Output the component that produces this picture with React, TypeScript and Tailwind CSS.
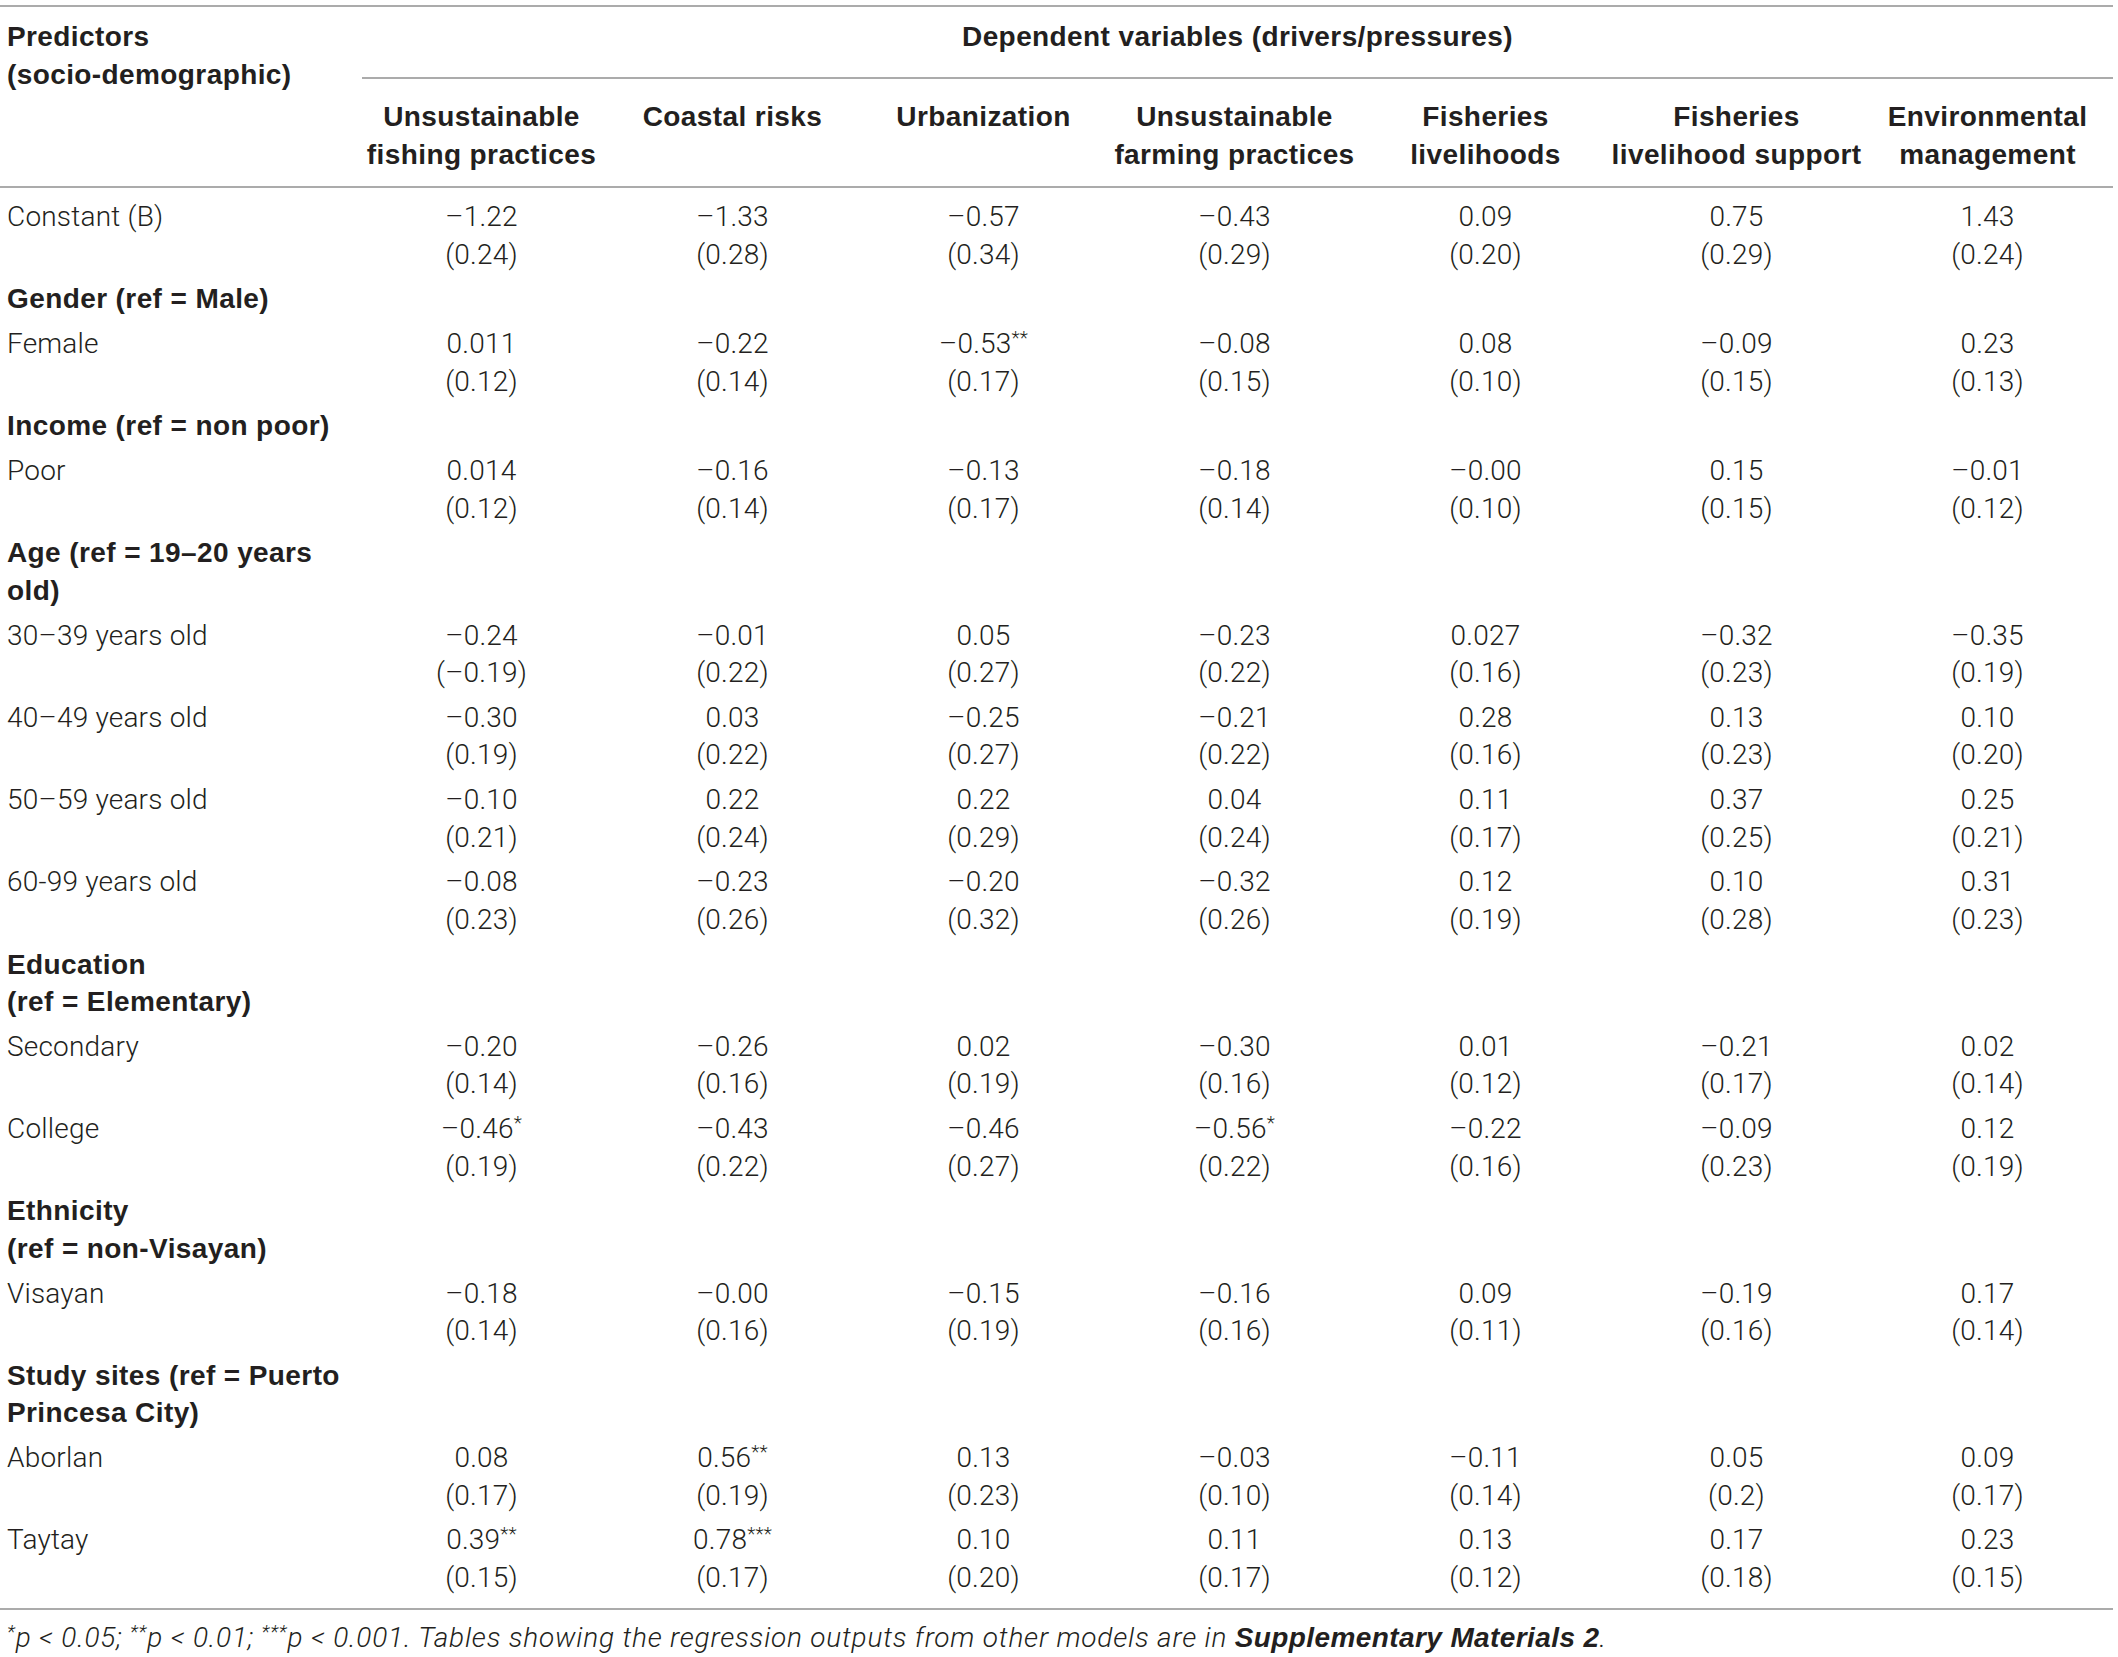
// Regression table - socio-demographic predictors vs drivers/pressures

type Cell = [string, string, string?] // value, standard error, stars

type Row =
  | { kind: 'group'; label: string[] }
  | { kind: 'data'; label: string; cells: Cell[] }

const columns = [
  ['Unsustainable', 'fishing practices'],
  ['Coastal risks'],
  ['Urbanization'],
  ['Unsustainable', 'farming practices'],
  ['Fisheries', 'livelihoods'],
  ['Fisheries', 'livelihood support'],
  ['Environmental', 'management'],
]

const rows: Row[] = [
  {
    kind: 'data',
    label: 'Constant (B)',
    cells: [['–1.22', '0.24'], ['–1.33', '0.28'], ['–0.57', '0.34'], ['–0.43', '0.29'], ['0.09', '0.20'], ['0.75', '0.29'], ['1.43', '0.24']],
  },
  { kind: 'group', label: ['Gender (ref = Male)'] },
  {
    kind: 'data',
    label: 'Female',
    cells: [['0.011', '0.12'], ['–0.22', '0.14'], ['–0.53', '0.17', '**'], ['–0.08', '0.15'], ['0.08', '0.10'], ['–0.09', '0.15'], ['0.23', '0.13']],
  },
  { kind: 'group', label: ['Income (ref = non poor)'] },
  {
    kind: 'data',
    label: 'Poor',
    cells: [['0.014', '0.12'], ['–0.16', '0.14'], ['–0.13', '0.17'], ['–0.18', '0.14'], ['–0.00', '0.10'], ['0.15', '0.15'], ['–0.01', '0.12']],
  },
  { kind: 'group', label: ['Age (ref = 19–20 years', 'old)'] },
  {
    kind: 'data',
    label: '30–39 years old',
    cells: [['–0.24', '–0.19'], ['–0.01', '0.22'], ['0.05', '0.27'], ['–0.23', '0.22'], ['0.027', '0.16'], ['–0.32', '0.23'], ['–0.35', '0.19']],
  },
  {
    kind: 'data',
    label: '40–49 years old',
    cells: [['–0.30', '0.19'], ['0.03', '0.22'], ['–0.25', '0.27'], ['–0.21', '0.22'], ['0.28', '0.16'], ['0.13', '0.23'], ['0.10', '0.20']],
  },
  {
    kind: 'data',
    label: '50–59 years old',
    cells: [['–0.10', '0.21'], ['0.22', '0.24'], ['0.22', '0.29'], ['0.04', '0.24'], ['0.11', '0.17'], ['0.37', '0.25'], ['0.25', '0.21']],
  },
  {
    kind: 'data',
    label: '60-99 years old',
    cells: [['–0.08', '0.23'], ['–0.23', '0.26'], ['–0.20', '0.32'], ['–0.32', '0.26'], ['0.12', '0.19'], ['0.10', '0.28'], ['0.31', '0.23']],
  },
  { kind: 'group', label: ['Education', '(ref = Elementary)'] },
  {
    kind: 'data',
    label: 'Secondary',
    cells: [['–0.20', '0.14'], ['–0.26', '0.16'], ['0.02', '0.19'], ['–0.30', '0.16'], ['0.01', '0.12'], ['–0.21', '0.17'], ['0.02', '0.14']],
  },
  {
    kind: 'data',
    label: 'College',
    cells: [['–0.46', '0.19', '*'], ['–0.43', '0.22'], ['–0.46', '0.27'], ['–0.56', '0.22', '*'], ['–0.22', '0.16'], ['–0.09', '0.23'], ['0.12', '0.19']],
  },
  { kind: 'group', label: ['Ethnicity', '(ref = non-Visayan)'] },
  {
    kind: 'data',
    label: 'Visayan',
    cells: [['–0.18', '0.14'], ['–0.00', '0.16'], ['–0.15', '0.19'], ['–0.16', '0.16'], ['0.09', '0.11'], ['–0.19', '0.16'], ['0.17', '0.14']],
  },
  { kind: 'group', label: ['Study sites (ref = Puerto', 'Princesa City)'] },
  {
    kind: 'data',
    label: 'Aborlan',
    cells: [['0.08', '0.17'], ['0.56', '0.19', '**'], ['0.13', '0.23'], ['–0.03', '0.10'], ['–0.11', '0.14'], ['0.05', '0.2'], ['0.09', '0.17']],
  },
  {
    kind: 'data',
    label: 'Taytay',
    cells: [['0.39', '0.15', '**'], ['0.78', '0.17', '***'], ['0.10', '0.20'], ['0.11', '0.17'], ['0.13', '0.12'], ['0.17', '0.18'], ['0.23', '0.15']],
  },
]

const font = { fontFamily: 'Roboto, "Liberation Sans", sans-serif' }
const boldFont = { fontFamily: '"Liberation Sans", Arial, sans-serif' }

function Rule() {
  return <div className="h-[2px] bg-[#ababab]" />
}

export default function App() {
  return (
    <div className="w-[2118px] min-h-[1657px] bg-white pt-[5px] text-[28px] leading-[37.5px] text-[#231f20]" style={font}>
      <div className="w-[2113px]">
        <Rule />

        {/* Cabeçalho */}
        <div className="grid grid-cols-[356px_1fr] font-bold tracking-[0.4px]" style={boldFont}>
          <div className="pl-[7px] pt-[11px]">
            Predictors
            <br />
            (socio-demographic)
          </div>
          <div className="flex flex-col">
            <div className="ml-[6px] border-b-2 border-[#ababab] pt-[11px] pb-[21.5px] text-center">
              Dependent variables (drivers/pressures)
            </div>
            <div className="grid grid-cols-7 pt-[19px] pb-[12.5px] text-center">
              {columns.map((c, i) => (
                <div key={i} className="whitespace-nowrap">
                  {c.map((line, j) => (
                    <div key={j}>{line}</div>
                  ))}
                </div>
              ))}
            </div>
          </div>
        </div>

        <Rule />

        {/* Corpo */}
        <div className="flex flex-col pt-[7px] pb-[7.5px] font-light tracking-[0.2px]">
          {rows.map((r, i) =>
            r.kind === 'group' ? (
              <div key={i} className="py-[3.63px] pl-[7px] font-bold tracking-[0.4px]" style={boldFont}>
                {r.label.map((l, j) => (
                  <div key={j}>{l}</div>
                ))}
              </div>
            ) : (
              <div key={i} className="grid grid-cols-[356px_repeat(7,251px)] py-[3.63px]">
                <div className="pl-[7px]">{r.label}</div>
                {r.cells.map(([v, se, stars], j) => (
                  <div key={j} className="text-center">
                    <div>
                      {v}
                      {stars && <span className="relative -top-[9px] text-[19px] leading-none">{stars}</span>}
                    </div>
                    <div>({se})</div>
                  </div>
                ))}
              </div>
            )
          )}
        </div>

        <Rule />

        {/* Nota */}
        <p className="pl-[7px] pt-[9px] italic font-light tracking-[0.8px] whitespace-nowrap">
          <span className="relative -top-[9px] text-[19px] leading-none">*</span>p &lt; 0.05;{' '}
          <span className="relative -top-[9px] text-[19px] leading-none">**</span>p &lt; 0.01;{' '}
          <span className="relative -top-[9px] text-[19px] leading-none">***</span>p &lt; 0.001. Tables showing the
          regression outputs from other models are in{' '}
          <span className="font-bold tracking-[0.4px]" style={boldFont}>Supplementary Materials 2</span>.
        </p>
      </div>
    </div>
  )
}
